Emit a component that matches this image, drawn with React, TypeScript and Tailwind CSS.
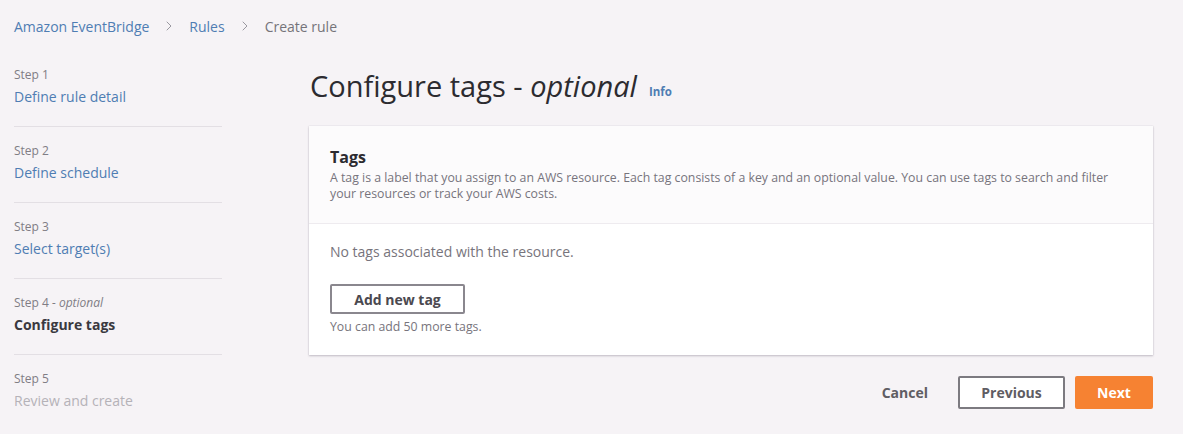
import { ChevronRight } from "lucide-react";

const steps = [
  { step: "Step 1", label: "Define rule detail", state: "done" },
  { step: "Step 2", label: "Define schedule", state: "done" },
  { step: "Step 3", label: "Select target(s)", state: "done" },
  { step: "Step 4", optional: true, label: "Configure tags", state: "active" },
  { step: "Step 5", label: "Review and create", state: "todo" },
];

function Breadcrumbs() {
  return (
    <nav className="flex items-center gap-[12px] h-[20px] text-[14px]">
      <span className="text-[#4f7db3]">Amazon EventBridge</span>
      <ChevronRight size={16} strokeWidth={1.5} className="text-[#9a98a0]" />
      <span className="text-[#4f7db3]">Rules</span>
      <ChevronRight size={16} strokeWidth={1.5} className="text-[#9a98a0]" />
      <span className="text-[#75737a]">Create rule</span>
    </nav>
  );
}

function StepNav() {
  return (
    <ul className="w-[208px] flex flex-col">
      {steps.map((s, i) => (
        <li
          key={s.step}
          className={
            "flex flex-col h-[76px] pt-[16px] " +
            (i < steps.length - 1 ? "border-b border-[#e3dfe4]" : "")
          }
        >
          <span className="text-[12px] text-[#807d85] leading-[16px]">
            {s.step}
            {s.optional && <i> - optional</i>}
          </span>
          <span
            className={
              "text-[14px] leading-[20px] mt-[4px] " +
              (s.state === "done"
                ? "text-[#4f7db3]"
                : s.state === "active"
                ? "font-bold text-[#3a3940]"
                : "text-[#b5b2b8]")
            }
          >
            {s.label}
          </span>
        </li>
      ))}
    </ul>
  );
}

export default function App() {
  return (
    <div
      className="w-[1183px] h-[434px] bg-[#f6f3f6] overflow-hidden pl-[14px] pt-[16px]"
      style={{ fontFamily: '"Open Sans", "Noto Sans", sans-serif' }}
    >
      <Breadcrumbs />
      <div className="flex mt-[15px]">
        <StepNav />
        <main className="ml-[87px] w-[844px] flex flex-col">
          <div className="flex items-end h-[36px] mt-[17px]">
            <h1 className="text-[29px] leading-[36px] text-[#2c2b30] ml-[1px]">
              Configure tags - <i>optional</i>
            </h1>
            <span className="text-[11.5px] font-bold text-[#4f7db3] ml-[12px] mb-[4px]">Info</span>
          </div>
          <section className="mt-[22px] bg-white shadow-[0_1px_2px_rgba(80,70,90,0.3),0_0_1px_rgba(80,70,90,0.2)]">
            <div className="bg-[#fcfbfc] border-b border-[#eeebef] h-[98px] px-[21px] pt-[20px]">
              <h2 className="text-[16px] leading-[22px] font-bold text-[#2c2b30]">Tags</h2>
              <p className="text-[12.3px] leading-[16px] text-[#77747c] mt-[2px]">
                A tag is a label that you assign to an AWS resource. Each tag consists of a key and an optional value. You can use tags to search and filter
                <br />
                your resources or track your AWS costs.
              </p>
            </div>
            <div className="px-[21px] pt-[18px] pb-[20px]">
              <p className="text-[14px] leading-[20px] text-[#77747c]">No tags associated with the resource.</p>
              <button className="mt-[22px] w-[135px] h-[30px] border-2 border-[#8a878e] rounded-[2px] text-[14px] font-bold text-[#4b4950]">
                Add new tag
              </button>
              <p className="text-[12.3px] leading-[16px] text-[#77747c] mt-[5px]">You can add 50 more tags.</p>
            </div>
          </section>
          <div className="flex justify-end items-center gap-[10px] mt-[21px]">
            <button className="text-[14px] font-bold text-[#5f5d63] px-[20px] h-[33px]">Cancel</button>
            <button className="w-[107px] h-[33px] border-2 border-[#7c7a80] rounded-[2px] bg-white text-[14px] font-bold text-[#5f5d63]">
              Previous
            </button>
            <button className="w-[78px] h-[33px] rounded-[2px] bg-[#f68232] text-[14px] font-bold text-white">
              Next
            </button>
          </div>
        </main>
      </div>
    </div>
  );
}
